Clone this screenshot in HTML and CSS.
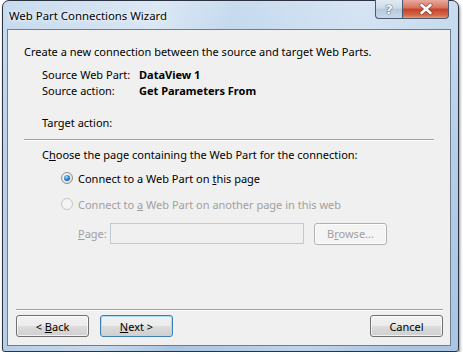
FILE: index.html
```html
<!DOCTYPE html>
<html>
<head>
<meta charset="utf-8">
<link rel="stylesheet" href="styles.css">
</head>
<body>
<div class="window">
  <div class="titlebar">
    <span class="title">Web Part Connections Wizard</span>
    <div class="controls">
      <div class="ctl help">?</div>
      <div class="ctl close">
        <svg width="16" height="12" viewBox="0 0 16 12"><path d="M3.5 2 L12.5 10 M12.5 2 L3.5 10" stroke="#5a2418" stroke-width="4" stroke-linecap="round" opacity="0.55"/><path d="M3.5 2 L12.5 10 M12.5 2 L3.5 10" stroke="#fff" stroke-width="2.6" stroke-linecap="round"/></svg>
      </div>
    </div>
  </div>
  <div class="client">
    <div class="top">
      <p class="intro">Create a new connection between the source and target Web Parts.</p>
      <div class="info">
        <span>Source Web Part:</span><b>DataView 1</b>
        <span>Source action:</span><b>Get Parameters From</b>
        <span class="gap">Target action:</span><b class="gap"></b>
      </div>
      <div class="sep"></div>
      <p class="choose">C<u>h</u>oose the page containing the Web Part for the connection:</p>
      <div class="radio-row">
        <span class="radio checked"></span><span>Connect to a Web Part on <u>t</u>his page</span>
      </div>
      <div class="radio-row disabled">
        <span class="radio"></span><span>Connect to <u>a</u> Web Part on another page in this web</span>
      </div>
      <div class="page-row disabled">
        <span class="page-label"><u>P</u>age:</span>
        <span class="input"></span>
        <span class="btn dis"><span>B<u>r</u>owse...</span></span>
      </div>
    </div>
    <div class="bottom">
      <div class="sep2"></div>
      <div class="buttons">
        <span class="btn"><span>&lt; <u>B</u>ack</span></span>
        <span class="btn default"><span><u>N</u>ext &gt;</span></span>
        <span class="spacer"></span>
        <span class="btn"><span>Cancel</span></span>
      </div>
    </div>
  </div>
</div>
</body>
</html>
```
FILE: styles.css
```css
html, body {
  margin: 0;
  padding: 0;
  background: #ffffff;
}
body {
  font-family: "Noto Sans", "Open Sans", "DejaVu Sans", sans-serif;
  font-size: 11px;
  color: #000;
}
.window {
  margin-left: 2px;
  width: 457px;
  height: 352px;
  box-sizing: border-box;
  border: 1px solid #2b3340;
  border-radius: 7px 7px 3px 3px;
  background:
    linear-gradient(100deg, rgba(255,255,255,0) 0%, rgba(255,255,255,0.35) 30%, rgba(255,255,255,0) 45%, rgba(255,255,255,0.25) 70%, rgba(255,255,255,0) 90%),
    linear-gradient(180deg, #c9dcef 0%, #b6cfe8 40%, #a9c5e3 100%);
  display: flex;
  flex-direction: column;
  box-shadow: 1px 2px 3px rgba(0,0,0,0.45);
}
.titlebar {
  height: 28px;
  display: flex;
  align-items: flex-start;
  flex-shrink: 0;
}
.title {
  padding: 7px 0 0 6px;
  font-size: 11.4px;
  line-height: 16px;
  color: #000;
  text-shadow: 0 0 6px rgba(255,255,255,0.9), 0 0 3px rgba(255,255,255,0.9);
}
.controls {
  margin-left: auto;
  margin-right: 9px;
  display: flex;
  margin-top: -1px;
}
.ctl {
  height: 19px;
  box-sizing: border-box;
  border: 1px solid #4b5a6e;
  border-top: none;
  display: flex;
  align-items: center;
  justify-content: center;
}
.help {
  width: 27px;
  border-radius: 0 0 0 4px;
  border-right: none;
  background: linear-gradient(180deg, #e1eaf4 0%, #ccdbea 45%, #b5c9de 50%, #c7d8ea 100%);
  color: #fff;
  font-family: "DejaVu Sans", sans-serif;
  font-weight: bold;
  font-size: 13px;
  text-shadow: 0 0 1px #333, 0 0 1px #333;
}
.close {
  width: 47px;
  border-radius: 0 0 4px 0;
  background: linear-gradient(180deg, #e9a99c 0%, #d7705c 45%, #c6412a 50%, #d36a4a 85%, #e89a72 100%);
}
.client {
  flex: 1;
  margin: 0 7px 5px 4px;
  border: 1px solid #6f7e8e;
  background: #f0f0f0;
  display: flex;
  flex-direction: column;
}
.top {
  padding: 14px 16px 0 16px;
  flex: 1;
}
p { margin: 0; line-height: 16px; }
.info {
  margin-top: 7px;
  padding-left: 18px;
  display: grid;
  grid-template-columns: 97px auto;
  line-height: 16px;
}
.info b { font-weight: bold; }
.info .gap { margin-top: 16px; }
.sep {
  margin-top: 8px;
  height: 0;
  border-top: 1px solid #a0a0a0;
  border-bottom: 1px solid #fff;
}
.choose {
  margin-top: 6px;
  padding-left: 18px;
}
.radio-row {
  margin-top: 7px;
  padding-left: 37px;
  display: flex;
  align-items: center;
  gap: 5px;
  height: 16px;
}
.radio-row + .radio-row { margin-top: 10px; }
.radio {
  width: 12px;
  height: 12px;
  border-radius: 50%;
  border: 1px solid #8f8f8f;
  box-sizing: border-box;
  background: radial-gradient(circle at 40% 35%, #fff 0%, #e6e6e6 60%, #d4d4d4 100%);
  position: relative;
}
.radio.checked::after {
  content: "";
  position: absolute;
  left: 2px; top: 2px;
  width: 6px; height: 6px;
  border-radius: 50%;
  background: radial-gradient(circle at 40% 35%, #9fd8ff 0%, #1c6fb8 60%, #0c3f7a 100%);
}
.disabled { color: #a0a0a0; }
.disabled .radio { border-color: #c6c6c6; background: #f4f4f4; }
.page-row {
  margin-top: 11px;
  padding-left: 54px;
  display: flex;
  align-items: center;
  height: 21px;
}
.page-label { width: 32px; }
.input {
  width: 194px;
  height: 21px;
  box-sizing: border-box;
  border: 1px solid #c0cad6;
  background: #f0f0f0;
}
.btn {
  width: 73px;
  height: 22px;
  box-sizing: border-box;
  border: 1px solid #707070;
  border-radius: 3px;
  background: linear-gradient(180deg, #f2f2f2 0%, #ebebeb 50%, #dddddd 51%, #cfcfcf 100%);
  box-shadow: inset 0 0 0 1px rgba(255,255,255,0.7);
  display: flex;
  align-items: center;
  justify-content: center;
  color: #000;
}
.btn.dis {
  margin-left: 10px;
  border-color: #adb2b5;
  background: #f4f4f4;
  color: #a0a0a0;
}
.btn.default {
  border-color: #3c7fb1;
  box-shadow: inset 0 0 0 1px #a9dcf7;
}
.bottom {
  padding: 0 7px 8px 8px;
}
.sep2 {
  height: 0;
  border-top: 1px solid #a0a0a0;
  border-bottom: 1px solid #fff;
}
.buttons {
  margin-top: 4px;
  display: flex;
  gap: 11px;
}
.spacer { flex: 1; }
u { text-decoration: underline; text-underline-offset: 1px; }
```
